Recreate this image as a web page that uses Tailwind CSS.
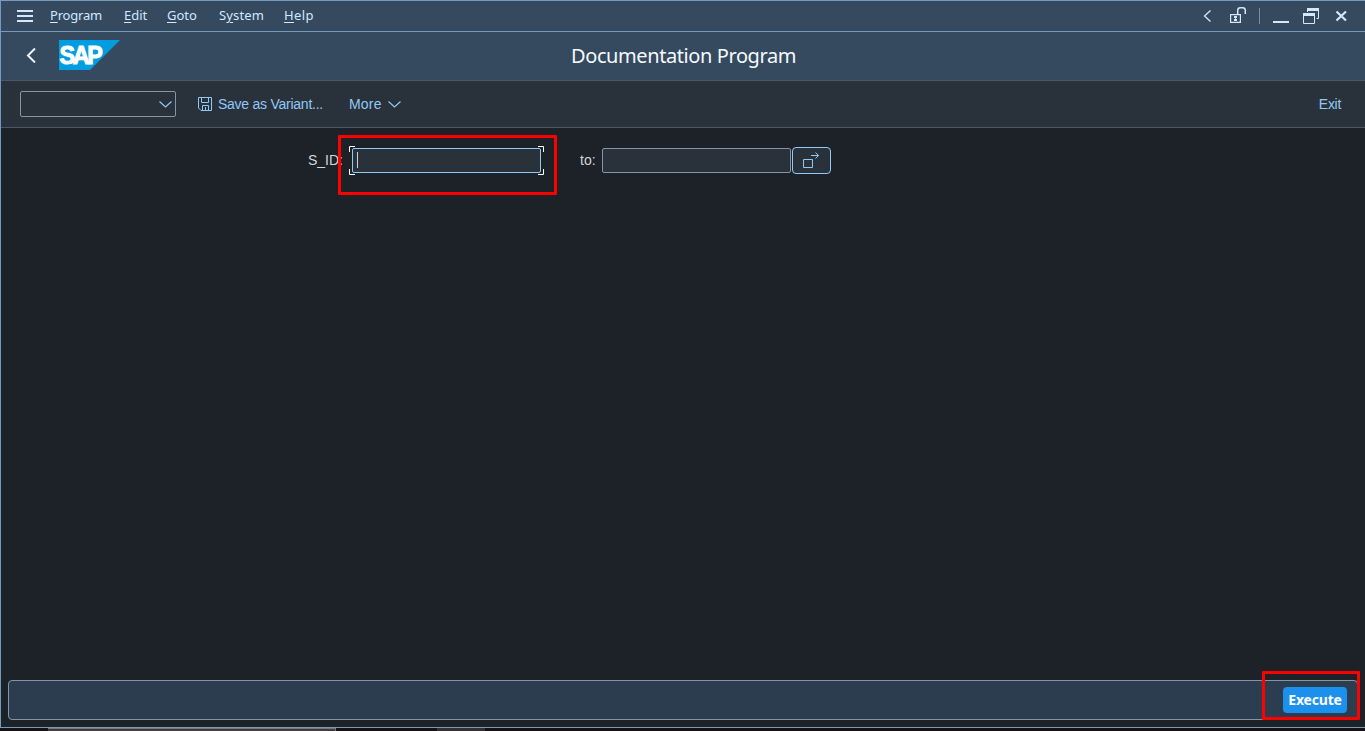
<!DOCTYPE html>
<html lang="en">
<head>
<meta charset="utf-8">
<title>Documentation Program</title>
<script src="https://cdn.jsdelivr.net/npm/@tailwindcss/browser@4"></script>
</head>
<body class="w-[1365px] h-[731px] overflow-hidden bg-[#141214] font-['Liberation_Sans',sans-serif] text-sm leading-5">
<div class="flex h-[728px] flex-col border-t border-l border-b border-[#7799bd] bg-[#1d2228]">
  <nav class="flex h-[31px] shrink-0 items-center border-b border-[#7799bd] bg-[#354a5f] text-[#d1e8ff] font-['Noto_Sans',sans-serif] text-[13px]">
    <svg class="ml-4 mr-[17px] h-3 w-4 shrink-0" viewBox="0 0 16 12" fill="#d1e8ff" shape-rendering="crispEdges"><path d="M0 0h16v2H0zM0 5h16v2H0zM0 10h16v2H0z"/></svg>
    <div class="flex pb-[2px]">
      <span class="w-[74px] tracking-[-0.2px]"><u class="underline-offset-2">P</u>rogram</span>
      <span class="w-[43px]"><u class="underline-offset-2">E</u>dit</span>
      <span class="w-[52px]"><u class="underline-offset-2">G</u>oto</span>
      <span class="w-[65px] tracking-[0.15px]">S<u class="underline-offset-2">y</u>stem</span>
      <span class="tracking-[0.4px]"><u class="underline-offset-2">H</u>elp</span>
    </div>
    <svg class="ml-auto h-[30px] w-[165px]" viewBox="1200 1 165 30" fill="none" stroke="#d1e8ff">
      <path d="M1210.5 10.5l-6 5.5 6 5.5" stroke-width="1.3"/>
      <path d="M1230.600 14.600h9.800v7.800h-9.800z" stroke-width="1.2"/>
      <path d="M1237.700 14v-3.500q0-2.700 2.700-2.700h2.200q2.700 0 2.700 2.700v3.500" stroke-width="1.5"/>
      <path d="M1234 16h3v2h-1v1h1v2h-3v-2h1v-1h-1z" fill="#d1e8ff" stroke="none"/>
      <path d="M1259.500 8v16" stroke="#7e8c9a"/>
      <path d="M1273 21h16v2h-16zM1307 8h12v3h-12zM1303 13h12v3h-12z" fill="#d1e8ff" stroke="none"/>
      <path d="M1303.500 13v10.500h11v-10.500M1318.500 9v9.500h-2M1307.500 10v2"/>
      <path d="M1336.500 11.500l9.500 9M1346 11.500l-9.500 9" stroke-width="2.200"/>
    </svg>
  </nav>
  <header class="grid h-[49px] shrink-0 grid-cols-[570px_1fr] items-center border-b border-[#4b5967] bg-[#354a5f]">
    <div class="flex items-center pb-[2px]">
      <svg class="ml-[25px] h-4 w-[11px]" viewBox="0 0 11 16" fill="none" stroke="#eaf4ff" stroke-width="2"><path d="M9 1.500L2 8.500l7 7"/></svg>
      <svg class="ml-[22px] h-[30px] w-[62px]" viewBox="0 0 62 30"><path d="M0 0h61L31 30H0z" fill="#009de0"/><text x="0.500" y="23.600" letter-spacing="-2.500" textLength="41" lengthAdjust="spacingAndGlyphs" fill="#fff" stroke="#fff" stroke-width="1" font-family="Liberation Sans" font-weight="700" font-size="25">SAP</text></svg>
    </div>
    <h1 class="text-xl tracking-[-0.41px] text-[#f5faff] font-['Noto_Sans',sans-serif]">Documentation Program</h1>
  </header>
  <section class="flex h-[47px] shrink-0 items-center border-b border-[#4b5967] bg-[#29313a] text-[#91c8f6]">
    <div class="ml-[19px] flex h-[26px] w-[156px] items-center justify-end rounded-[2px] border border-[#8396a8] pr-[3px]">
      <svg class="h-[7px] w-[13px]" viewBox="0 0 13 7" fill="none" stroke="#91c8f6" stroke-width="1.200"><path d="M.5.500l6 5.500 6-5.500"/></svg>
    </div>
    <svg class="ml-[22px] h-[14px] w-[14px]" viewBox="0 0 14 14" fill="none" stroke="#91c8f6"><path d="M.5.500h13v13H3L.5 11zM3.500.500v5h7v-5M4.500 13.500v-5h6v5M7.500 10v3.500"/></svg>
    <span class="ml-[6px] w-[131px] whitespace-nowrap tracking-[-0.25px]">Save as Variant...</span>
    <span class="w-[33px] tracking-[0.2px]">More</span>
    <svg class="ml-[6px] h-[7px] w-[13px]" viewBox="0 0 13 7" fill="none" stroke="#91c8f6" stroke-width="1.200"><path d="M.5.500l6 5.500 6-5.500"/></svg>
    <span class="ml-auto mr-6 tracking-[-0.3px]">Exit</span>
  </section>
  <main class="relative flex flex-1 items-start pt-5 text-[#d3d7db]">
    <span class="ml-[307px] mt-[2px] w-[42px] whitespace-nowrap">S_ID:</span>
    <div class="relative flex h-[25px] w-[189px] items-center rounded-[2px] border border-[#91c8f6] bg-[#29313a] ml-[2px]">
      <i class="ml-1 -mt-px h-4 w-px bg-[#d5d2c8]"></i>
      <svg class="absolute -left-[4px] -top-[3px] h-[29px] w-[196px]" viewBox="0 0 196 29" fill="none" stroke="#fff"><path d="M.5 6V.500H6M189 .500h5.500V6M.5 23v5.500H6M189 28.500h5.500V23"/></svg>
    </div>
    <span class="ml-[39px] mt-[2px] w-[22px]">to:</span>
    <div class="h-[25px] w-[189px] rounded-[2px] border border-[#8396a8] bg-[#29313a]"></div>
    <div class="-mt-px ml-px h-[27px] w-[39px] rounded border border-[#91c8f6] bg-[#29313a]">
      <svg class="h-[25px] w-[37px]" viewBox="0 0 37 25" fill="none" stroke="#91c8f6"><path d="M10.500 11.500h9v8h-9zM18 7.500h7.500M22.500 4.500l3 3-3 3"/></svg>
    </div>
    <div class="absolute left-[337px] top-[7px] h-[60px] w-[219px] rounded-[1px] border-[3px] border-[#f00]"></div>
  </main>
  <footer class="relative mx-[7px] mb-[7px] flex h-10 w-[1350px] shrink-0 items-center justify-end rounded border border-[#8396a8] bg-[#2c3d4f] pr-[10px]">
    <button class="flex h-[26px] w-16 items-center justify-center rounded bg-[#1b90ed] text-[14px] font-bold tracking-[-0.2px] text-white font-['Noto_Sans',sans-serif]">Execute</button>
    <div class="absolute left-[1253px] -top-[10px] h-[49px] w-[98px] rounded-[1px] border-[3px] border-[#f00]"></div>
  </footer>
</div>
<div class="flex h-[3px]"><i class="ml-12 h-full w-[288px] border-t border-r border-[#777] bg-[#403b3e]"></i><i class="ml-[101px] h-full w-12 bg-[#343134]"></i></div>
</body>
</html>
